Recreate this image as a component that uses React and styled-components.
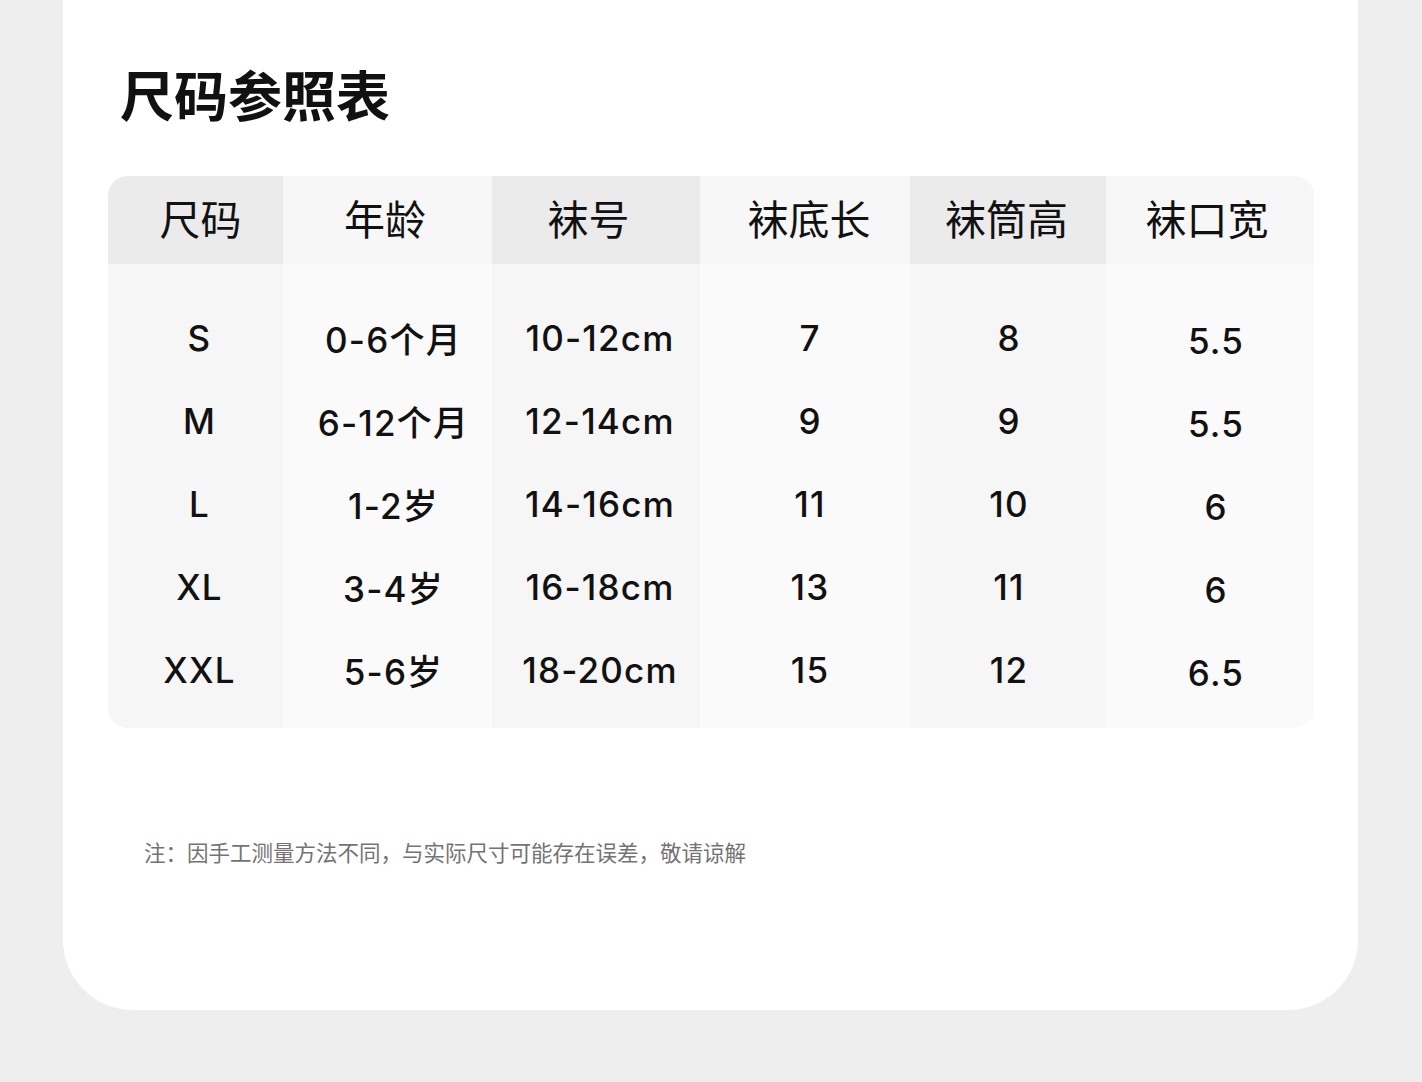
import React from "react";
import styled, { createGlobalStyle } from "styled-components";

const Global = createGlobalStyle`
  html, body { margin: 0; padding: 0; background: #eeeeee; }
  body { font-family: Inter, "Noto Sans CJK SC", sans-serif; color: #111; }
`;

const Page = styled.div`
  width: 1422px;
  min-height: 1082px;
  background: #eeeeee;
  padding: 0 64px 72px 63px;
  box-sizing: border-box;
`;

const Card = styled.div`
  background: #ffffff;
  height: 1010px;
  box-sizing: border-box;
  border-radius: 0 0 70px 70px;
  padding: 67px 0 0 45px;
  display: flex;
  flex-direction: column;
`;

const Title = styled.h1`
  margin: 0 0 55px 12px;
  font-family: "Noto Sans CJK SC", sans-serif;
  font-size: 54px;
  line-height: 54px;
  font-weight: 700;
  color: #111;
`;

const Table = styled.div`
  display: flex;
  width: 1206px;
  border-radius: 20px;
  overflow: hidden;
`;

const Column = styled.div`
  width: ${(p) => p.$w}px;
  display: flex;
  flex-direction: column;
  background: ${(p) => (p.$dark ? "#f6f6f6" : "#fafafa")};
`;

/* $off: horizontal nudge of the centred text, via asymmetric padding */
const HeadCell = styled.div`
  height: 88px;
  display: flex;
  align-items: center;
  justify-content: center;
  background: ${(p) => (p.$dark ? "#ebebeb" : "#f7f7f7")};
  font-family: "Noto Sans CJK SC", sans-serif;
  font-size: 41px;
  font-weight: 400;
  color: #111;
  box-sizing: border-box;
  padding: 0 ${(p) => Math.max(0, -2 * p.$off)}px 6px ${(p) => Math.max(0, 2 * p.$off)}px;
`;

const Body = styled.div`
  padding: 32px 0 17px;
  display: flex;
  flex-direction: column;
`;

const Cell = styled.div`
  height: 83px;
  display: flex;
  align-items: center;
  justify-content: center;
  font-family: Inter, "Noto Sans CJK SC", sans-serif;
  font-size: 35px;
  font-weight: 500;
  letter-spacing: 1.2px;
  color: #111;
  box-sizing: border-box;
  padding: ${(p) => p.$dy}px ${(p) => Math.max(0, -2 * p.$off)}px 0 ${(p) => Math.max(0, 2 * p.$off)}px;
`;

const Note = styled.p`
  margin: 109px 0 0 36px;
  font-family: "Noto Sans CJK SC", sans-serif;
  font-size: 21.5px;
  line-height: 30px;
  color: #737373;
`;

const columns = [
  { head: "尺码", w: 175, off: 5, values: ["S", "M", "L", "XL", "XXL"], boff: 4, dy: 0 },
  { head: "年龄", w: 209, off: -2.5, values: ["0-6个月", "6-12个月", "1-2岁", "3-4岁", "5-6岁"], boff: 6, dy: 0 },
  { head: "袜号", w: 208, off: -7.5, values: ["10-12cm", "12-14cm", "14-16cm", "16-18cm", "18-20cm"], boff: 4, dy: 0 },
  { head: "袜底长", w: 210, off: 4, values: ["7", "9", "11", "13", "15"], boff: 5, dy: 0 },
  { head: "袜筒高", w: 196, off: -1.5, values: ["8", "9", "10", "11", "12"], boff: 1, dy: 0 },
  { head: "袜口宽", w: 208, off: -3, values: ["5.5", "5.5", "6", "6", "6.5"], boff: 6, dy: 6 },
];

export default function App() {
  return (
    <>
      <Global />
      <Page>
        <Card>
          <Title>尺码参照表</Title>
          <Table>
            {columns.map((c, i) => (
              <Column key={c.head} $w={c.w} $dark={i % 2 === 0}>
                <HeadCell $dark={i % 2 === 0} $off={c.off}>
                  {c.head}
                </HeadCell>
                <Body>
                  {c.values.map((v, j) => (
                    <Cell key={j} $off={c.boff} $dy={c.dy}>
                      {v}
                    </Cell>
                  ))}
                </Body>
              </Column>
            ))}
          </Table>
          <Note>注：因手工测量方法不同，与实际尺寸可能存在误差，敬请谅解</Note>
        </Card>
      </Page>
    </>
  );
}
